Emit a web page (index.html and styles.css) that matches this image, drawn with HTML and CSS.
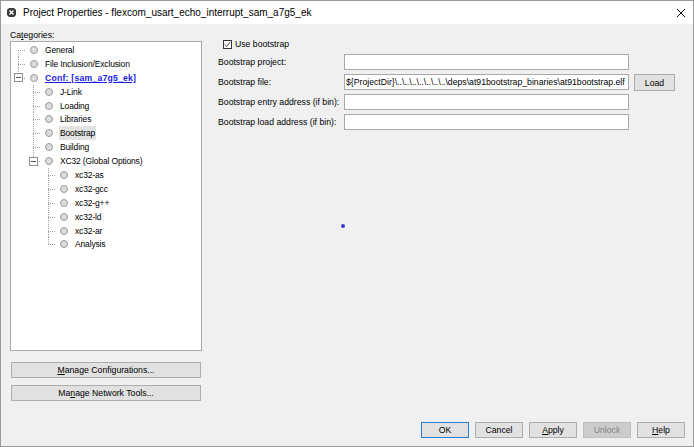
FILE: index.html
```html
<!DOCTYPE html>
<html lang="en">

<head>
    <meta charset="UTF-8">
    <title>Project Properties</title>
    <link rel="stylesheet" href="styles.css">
</head>

<body>
    <div class="window">
        <!-- title bar -->
        <div class="titlebar">
            <svg class="app-icon" viewBox="0 0 9 9">
                <polygon points="2,0 7,0 9,2 9,7 7,9 2,9 0,7 0,2" fill="#3b3b3b"/>
                <path d="M2.5 2.5 L6.5 6.5 M6.5 2.5 L2.5 6.5" stroke="#fff" stroke-width="1.4"/>
            </svg>
            <span class="title">Project Properties - flexcom_usart_echo_interrupt_sam_a7g5_ek</span>
            <svg class="close" viewBox="0 0 8 8">
                <path d="M0 0 L8 8 M8 0 L0 8" stroke="#111" stroke-width="1"/>
            </svg>
        </div>

        <div class="content">
            <div class="main">
                <!-- categories -->
                <div class="side">
                    <div class="cat-label">Ca<u>t</u>egories:</div>
                    <div class="tree">
                        <div class="row"><i class="c first"></i><i class="node"></i><span class="txt">General</span></div>
                        <div class="row"><i class="c tee"></i><i class="node"></i><span class="txt">File Inclusion/Exclusion</span></div>
                        <div class="row"><i class="c elbow"><b class="exp"></b></i><i class="node"></i><span class="txt conf">Conf: [sam_a7g5_ek]</span></div>
                        <div class="row"><i class="c"></i><i class="c tee"></i><i class="node"></i><span class="txt">J-Link</span></div>
                        <div class="row"><i class="c"></i><i class="c tee"></i><i class="node"></i><span class="txt">Loading</span></div>
                        <div class="row"><i class="c"></i><i class="c tee"></i><i class="node"></i><span class="txt">Libraries</span></div>
                        <div class="row"><i class="c"></i><i class="c tee"></i><i class="node"></i><span class="txt sel">Bootstrap</span></div>
                        <div class="row"><i class="c"></i><i class="c tee"></i><i class="node"></i><span class="txt">Building</span></div>
                        <div class="row"><i class="c"></i><i class="c elbow"><b class="exp"></b></i><i class="node"></i><span class="txt">XC32 (Global Options)</span></div>
                        <div class="row"><i class="c"></i><i class="c"></i><i class="c tee"></i><i class="node"></i><span class="txt">xc32-as</span></div>
                        <div class="row"><i class="c"></i><i class="c"></i><i class="c tee"></i><i class="node"></i><span class="txt">xc32-gcc</span></div>
                        <div class="row"><i class="c"></i><i class="c"></i><i class="c tee"></i><i class="node"></i><span class="txt">xc32-g++</span></div>
                        <div class="row"><i class="c"></i><i class="c"></i><i class="c tee"></i><i class="node"></i><span class="txt">xc32-ld</span></div>
                        <div class="row"><i class="c"></i><i class="c"></i><i class="c tee"></i><i class="node"></i><span class="txt">xc32-ar</span></div>
                        <div class="row"><i class="c"></i><i class="c"></i><i class="c elbow"></i><i class="node"></i><span class="txt">Analysis</span></div>
                    </div>
                    <button class="btn wide"><u>M</u>anage Configurations...</button>
                    <button class="btn wide second">Ma<u>n</u>age Network Tools...</button>
                </div>

                <!-- bootstrap page -->
                <div class="panel">
                    <div class="check-row">
                        <span class="checkbox">
                            <svg viewBox="0 0 8 8"><polyline points="1,4 3,6.3 7,1" fill="none" stroke="#333" stroke-width="1"/></svg>
                        </span>
                        <span>Use bootstrap</span>
                    </div>
                    <div class="form">
                        <span class="lbl">Bootstrap project:</span>
                        <div class="field"></div>
                        <span></span>

                        <span class="lbl">Bootstrap file:</span>
                        <div class="field">&#36;{ProjectDir}\..\..\..\..\..\..\..\deps\at91bootstrap_binaries\at91bootstrap.elf</div>
                        <button class="btn load">Load</button>

                        <span class="lbl">Bootstrap entry address (if bin):</span>
                        <div class="field"></div>
                        <span></span>

                        <span class="lbl">Bootstrap load address (if bin):</span>
                        <div class="field"></div>
                        <span></span>
                    </div>
                    <div class="busy-dot"></div>
                </div>
            </div>

            <!-- dialog buttons -->
            <div class="footer">
                <button class="btn default">OK</button>
                <button class="btn">Cancel</button>
                <button class="btn"><u>A</u>pply</button>
                <button class="btn" disabled>Unlock</button>
                <button class="btn"><u>H</u>elp</button>
            </div>
        </div>
    </div>
</body>

</html>
```

FILE: styles.css
```css
* {
    margin: 0;
    padding: 0;
    box-sizing: border-box;
}

body {
    width: 694px;
    height: 447px;
    font-family: "Liberation Sans", Arial, sans-serif;
    font-size: 8.7px;
    color: #000;
    background: #fff;
}

u {
    text-decoration: underline;
    text-underline-offset: 1px;
}

/* window frame */
.window {
    width: 694px;
    height: 447px;
    border: 1px solid #9a9a9a;
    background: #f0f0f0;
    display: flex;
    flex-direction: column;
}

.titlebar {
    height: 23px;
    background: #fff;
    display: flex;
    align-items: center;
    padding: 0 8px 0 6px;
}

.app-icon {
    width: 9px;
    height: 9px;
    margin-right: 7px;
}

.title {
    flex: 1;
    font-size: 10px;
}

.close {
    width: 8px;
    height: 8px;
}

.content {
    flex: 1;
    display: flex;
    flex-direction: column;
}

.main {
    flex: 1;
    display: flex;
}

/* left column */
.side {
    width: 201px;
    padding: 5px 0 0 9px;
    display: flex;
    flex-direction: column;
}

.cat-label {
    height: 12px;
    line-height: 12px;
}

.tree {
    height: 310px;
    padding-top: 1px;
    border: 1px solid #ababab;
    background: #fff;
}

.row {
    height: 13.9px;
    display: flex;
    align-items: center;
    white-space: nowrap;
}

/* tree connector cells */
.c {
    width: 15px;
    height: 14px;
    flex: none;
    display: flex;
    align-items: center;
    background-repeat: no-repeat;
}

.tee {
    background-image:
        repeating-linear-gradient(to bottom, #a3a3a3 0 1px, transparent 1px 2px),
        repeating-linear-gradient(to right, #a3a3a3 0 1px, transparent 1px 2px);
    background-size: 1px 14px, 8px 1px;
    background-position: 7px 0, 7px 7px;
}

.elbow {
    background-image:
        repeating-linear-gradient(to bottom, #a3a3a3 0 1px, transparent 1px 2px),
        repeating-linear-gradient(to right, #a3a3a3 0 1px, transparent 1px 2px);
    background-size: 1px 7px, 8px 1px;
    background-position: 7px 0, 7px 7px;
}

.first {
    background-image:
        repeating-linear-gradient(to bottom, #a3a3a3 0 1px, transparent 1px 2px),
        repeating-linear-gradient(to right, #a3a3a3 0 1px, transparent 1px 2px);
    background-size: 1px 7px, 8px 1px;
    background-position: 7px 7px, 7px 7px;
}

.exp {
    width: 9px;
    height: 9px;
    margin-left: 3px;
    border: 1px solid #8f8f8f;
    background: linear-gradient(#555, #555) center / 5px 1px no-repeat, #fff;
}

.node {
    width: 15px;
    height: 14px;
    flex: none;
    display: flex;
    align-items: center;
}

.node::before {
    content: "";
    width: 6px;
    height: 6px;
    margin-left: 4px;
    border: 1px solid #9a9a9a;
    border-radius: 50%;
    background: #dcdcdc;
}

.txt {
    margin-left: 4px;
    line-height: 14px;
    font-size: 8.5px;
    letter-spacing: -0.15px;
}

.conf {
    font-size: 8.7px;
    font-weight: bold;
    letter-spacing: 0.2px;
    color: #1b1be6;
    text-decoration: underline;
}

.sel {
    margin-left: 3px;
    padding: 0 1px;
    background: #e3e3e3;
}

/* buttons */
.btn {
    font-family: inherit;
    font-size: inherit;
    color: #000;
    height: 16px;
    background: #e1e1e1;
    border: 1px solid #adadad;
    display: flex;
    align-items: center;
    justify-content: center;
}

.btn.wide {
    margin: 11px 1px 0 1px;
    width: 190px;
}

.btn.wide.second {
    margin-top: 7px;
}

.btn.default {
    border-color: #2a7fd4;
}

.btn:disabled {
    background: #cccccc;
    border-color: #bfbfbf;
    color: #838383;
}

/* right panel */
.panel {
    flex: 1;
    padding: 13px 0 0 16px;
}

.check-row {
    height: 14px;
    display: flex;
    align-items: center;
}

.checkbox {
    width: 9px;
    height: 9px;
    margin: 0 3px 0 5px;
    border: 1px solid #333;
    background: #fff;
    display: flex;
}

.checkbox svg {
    width: 7px;
    height: 7px;
}

.form {
    margin-top: 3px;
    display: grid;
    grid-template-columns: 126px 285px auto;
    grid-auto-rows: 16px;
    row-gap: 4px;
    align-items: center;
}

.field {
    height: 16px;
    border: 1px solid #a9a9a9;
    background: #fff;
    line-height: 14px;
    padding-left: 1px;
    white-space: nowrap;
    overflow: hidden;
}

.btn.load {
    width: 41px;
    height: 17px;
    margin-left: 5px;
    align-self: start;
}

.busy-dot {
    width: 4px;
    height: 4px;
    margin: 94px 0 0 123px;
    border-radius: 50%;
    background: #3b3bd8;
}

/* dialog buttons */
.footer {
    display: flex;
    justify-content: flex-end;
    gap: 6px;
    padding: 0 8px 8px 0;
}

.footer .btn {
    width: 48px;
}
```
